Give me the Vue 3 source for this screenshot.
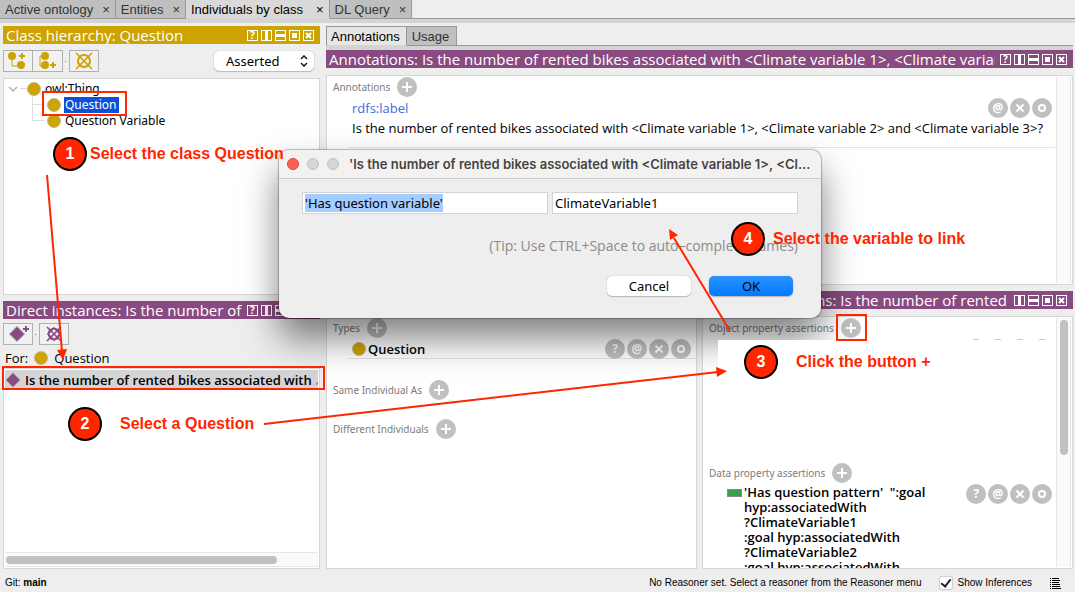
<script setup>
import { onMounted, ref } from 'vue'

const tabs = [
  { name: 'Active ontology', active: false },
  { name: 'Entities', active: false },
  { name: 'Individuals by class', active: true },
  { name: 'DL Query', active: false },
]
const controlPaths = {
  help: '',
  split: 'M4 1h3v9h-3z',
  stack: 'M1 4h9v3h-9z',
  full: 'M3 3h5v5h-5z',
  close: 'M3 3l5 5M8 3l-5 5',
}
const allControls = ['help', 'split', 'stack', 'full', 'close']
const fewControls = ['split', 'stack', 'full', 'close']
const pattern = [
  "'Has question pattern'  \":goal",
  'hyp:associatedWith',
  '?ClimateVariable1',
  ':goal hyp:associatedWith',
  '?ClimateVariable2',
  ':goal hyp:associatedWith',
]
const property = ref("'Has question variable'")
const target = ref('ClimateVariable1')
const propertyInput = ref(null)

onMounted(() => {
  propertyInput.value.focus()
  propertyInput.value.select()
})
</script>

<template>
  <div class="window">
    <nav class="tabs main-tabs">
      <button v-for="t in tabs" :key="t.name" class="tab" :class="{ active: t.active }">
        {{ t.name }}<span class="x">×</span>
      </button>
    </nav>

    <main class="workspace">
      <section class="left">
        <header class="bar gold">
          <h2>Class hierarchy: Question</h2>
          <span class="controls">
            <button v-for="c in allControls" :key="c" :aria-label="c">
              <svg width="11" height="11" viewBox="0 0 11 11" :class="c">
                <rect x=".5" y=".5" width="10" height="10" />
                <text v-if="c === 'help'" x="5.5" y="9">?</text>
                <path v-else :d="controlPaths[c]" />
              </svg>
            </button>
          </span>
        </header>
        <div class="toolbar">
          <button class="tool" aria-label="Add subclass">
            <svg width="22" height="20" viewBox="0 0 22 20">
              <path d="M5 6v9h7" fill="none" stroke="#cca300" />
              <circle cx="5" cy="5" r="4" fill="#cca300" /><circle cx="14" cy="14" r="4" fill="#cca300" />
              <path d="M15 2v6M12 5h6" stroke="#cca300" stroke-width="2" />
            </svg>
          </button>
          <button class="tool joined" aria-label="Add sibling class">
            <svg width="22" height="20" viewBox="0 0 22 20">
              <path d="M8 5h-5v10h6" fill="none" stroke="#cca300" />
              <circle cx="8" cy="5" r="4" fill="#cca300" /><circle cx="8" cy="14" r="4" fill="#cca300" />
              <path d="M16 11v6M13 14h6" stroke="#cca300" stroke-width="2" />
            </svg>
          </button>
          <i class="dot"></i>
          <button class="tool" aria-label="Delete class">
            <svg width="22" height="20" viewBox="0 0 22 20" fill="none" stroke="#cca300" stroke-width="2">
              <circle cx="11" cy="10" r="6" /><path d="M3 2l16 16M19 2l-16 16" stroke-width="1.6" />
            </svg>
          </button>
          <span class="picker">
            <select aria-label="Hierarchy"><option>Asserted</option></select>
            <svg width="8" height="12" viewBox="0 0 8 12"><path d="M1 4l3-3 3 3M1 8l3 3 3-3" fill="none" stroke="#222" stroke-width="1.6" /></svg>
          </span>
        </div>
        <div class="panel tree">
          <svg class="lines" width="46" height="44" viewBox="0 0 46 44" fill="none">
            <path d="M16 8.500h10M28.500 16v24.500h12M28.500 24.500h12" stroke="#ddd" />
            <path d="M5 7l4 4 4-4" stroke="#b4b4b4" stroke-width="1.5" />
          </svg>
          <ul>
            <li><i class="class-dot"></i><span>owl:Thing</span></li>
            <li class="child"><i class="class-dot"></i><span class="picked">Question</span></li>
            <li class="child"><i class="class-dot"></i><span>Question Variable</span></li>
          </ul>
        </div>

        <header class="bar plum">
          <h2>Direct instances: Is the number of rented bikes</h2>
          <span class="controls">
            <button v-for="c in allControls" :key="c" :aria-label="c">
              <svg width="11" height="11" viewBox="0 0 11 11" :class="c">
                <rect x=".5" y=".5" width="10" height="10" />
                <text v-if="c === 'help'" x="5.5" y="9">?</text>
                <path v-else :d="controlPaths[c]" />
              </svg>
            </button>
          </span>
        </header>
        <div class="toolbar low">
          <button class="tool" aria-label="Add individual">
            <svg width="22" height="20" viewBox="0 0 22 20">
              <path d="M10 2.500l7.500 7.500-7.500 7.500-7.500-7.500z" fill="#884a80" stroke="#a9a0a8" />
              <path d="M19 2v6M16 5h6" stroke="#884a80" stroke-width="1.800" />
            </svg>
          </button>
          <i class="dot"></i>
          <button class="tool" aria-label="Delete individual">
            <svg width="22" height="20" viewBox="0 0 22 20" fill="none" stroke="#884a80" stroke-width="1.600">
              <path d="M11 4l6 6-6 6-6-6z" /><circle cx="11" cy="10" r="5.500" /><path d="M4 3l14 14M18 3l-14 14" />
            </svg>
          </button>
        </div>
        <p class="for">For: <i class="class-dot"></i><span>Question</span></p>
        <div class="panel instances">
          <div class="instance">
            <svg width="16" height="16" viewBox="0 0 16 16"><path d="M8 .8l7.200 7.200-7.200 7.200-7.200-7.200z" fill="#884a80" stroke="#aaa" /></svg>
            <span>Is the number of rented bikes associated with</span><small>‚</small>
          </div>
          <div class="hscroll"><i></i></div>
        </div>
      </section>

      <section class="right">
        <nav class="tabs sub-tabs">
          <button class="tab active">Annotations</button>
          <button class="tab">Usage</button>
        </nav>
        <header class="bar plum">
          <h2>Annotations: Is the number of rented bikes associated with &lt;Climate variable 1&gt;, &lt;Climate variable 2&gt;</h2>
          <span class="controls">
            <button v-for="c in allControls" :key="c" :aria-label="c">
              <svg width="11" height="11" viewBox="0 0 11 11" :class="c">
                <rect x=".5" y=".5" width="10" height="10" />
                <text v-if="c === 'help'" x="5.5" y="9">?</text>
                <path v-else :d="controlPaths[c]" />
              </svg>
            </button>
          </span>
        </header>
        <div class="panel scrolling annotations">
          <div class="content">
            <h3>Annotations <button class="round plus" aria-label="Add annotation"></button></h3>
            <div class="entry">
              <div class="entry-text">
                <a href="#">rdfs:label</a>
                <p>Is the number of rented bikes associated with &lt;Climate variable 1&gt;, &lt;Climate variable 2&gt; and &lt;Climate variable 3&gt;?</p>
              </div>
              <span class="actions">
                <button class="round">@</button><button class="round cross" aria-label="Remove"></button><button class="round ring" aria-label="Edit"></button>
              </span>
            </div>
          </div>
          <div class="track"></div>
        </div>

        <div class="lower">
          <div class="half">
            <header class="bar plum">
              <h2>Description: Is the number of rented</h2>
            </header>
            <div class="panel">
              <div class="content">
                <h3>Types <button class="round plus" aria-label="Add type"></button></h3>
                <div class="entry type">
                  <i class="class-dot"></i><b>Question</b>
                  <span class="actions">
                    <button class="round">?</button><button class="round">@</button><button class="round cross" aria-label="Remove"></button><button class="round ring" aria-label="Edit"></button>
                  </span>
                </div>
                <h3 class="same">Same Individual As <button class="round plus" aria-label="Add same individual"></button></h3>
                <h3>Different Individuals <button class="round plus" aria-label="Add different individual"></button></h3>
              </div>
            </div>
          </div>
          <div class="half">
            <header class="bar plum">
              <h2 class="end">Property assertions: Is the number of rented</h2>
              <span class="controls">
                <button v-for="c in fewControls" :key="c" :aria-label="c">
                  <svg width="11" height="11" viewBox="0 0 11 11" :class="c">
                    <rect x=".5" y=".5" width="10" height="10" />
                    <path :d="controlPaths[c]" />
                  </svg>
                </button>
              </span>
            </header>
            <div class="panel scrolling">
              <div class="content">
                <h3>Object property assertions <button class="round plus" aria-label="Add object property assertion"></button></h3>
                <div class="blank">
                  <span class="actions">
                    <button v-for="n in 4" :key="n" class="round" aria-label="Action"></button>
                  </span>
                </div>
                <h3>Data property assertions <button class="round plus" aria-label="Add data property assertion"></button></h3>
                <div class="entry data">
                  <i class="green"></i>
                  <p><span v-for="(line, n) in pattern" :key="n">{{ line }}</span></p>
                  <span class="actions">
                    <button class="round">?</button><button class="round">@</button><button class="round cross" aria-label="Remove"></button><button class="round ring" aria-label="Edit"></button>
                  </span>
                </div>
              </div>
              <div class="track"><i></i></div>
            </div>
          </div>
        </div>
      </section>
    </main>

    <footer class="status">
      <span class="git">Git: <b>main</b></span>
      <span>No Reasoner set. Select a reasoner from the Reasoner menu</span>
      <label><input type="checkbox" checked />Show Inferences</label>
      <svg width="11" height="12" viewBox="0 0 11 12" stroke="#000"><path d="M0 1.500h1M2 1.500h7M0 3.500h1M2 3.500h8M0 5.500h1M2 5.500h7M0 7.500h1M2 7.500h8M0 9.500h1M2 9.500h8M0 11.500h1M2 11.500h9" /></svg>
    </footer>

    <div class="dialog" role="dialog" aria-labelledby="dialog-title">
      <header>
        <i class="light red"></i><i class="light"></i><i class="light"></i>
        <h1 id="dialog-title">'Is the number of rented bikes associated with &lt;Climate variable 1&gt;, &lt;Cl...</h1>
      </header>
      <form @submit.prevent>
        <div class="fields">
          <input ref="propertyInput" v-model="property" aria-label="Property" spellcheck="false" />
          <input v-model="target" aria-label="Individual" spellcheck="false" />
        </div>
        <p>(Tip: Use CTRL+Space to auto–complete names)</p>
        <div class="buttons">
          <button type="button">Cancel</button>
          <button type="submit" class="primary">OK</button>
        </div>
      </form>
    </div>

    <div class="overlay">
      <i class="cover"></i>
      <svg class="arrows" width="1075" height="592" viewBox="0 0 1075 592">
        <g stroke="#ff2600" stroke-width="2" fill="none">
          <path d="M47 175L62 351M264 424L718 372M730 331L674 238" />
          <rect x="43" y="92" width="83" height="23" />
          <rect x="3" y="367" width="321" height="22" />
          <rect x="837" y="315" width="29" height="25" />
        </g>
        <g fill="#ff2600">
          <path d="M63 360l-6-10 10-1zM727 371l-10 6-1-10zM669 229l9 6-8 5z" />
        </g>
      </svg>
      <div class="callout one"><b>1</b><span>Select the class Question</span></div>
      <div class="callout two"><b>2</b><span>Select a Question</span></div>
      <div class="callout three"><b>3</b><span>Click the button +</span></div>
      <div class="callout four"><b>4</b><span>Select the variable to link</span></div>
    </div>
  </div>
</template>

<style>
body {
  margin: 0;
}
</style>

<style scoped>
*, *::before {
  box-sizing: border-box;
}
h1, h2, h3, p, ul {
  margin: 0;
  padding: 0;
  font-weight: 400;
}
i {
  font-style: normal;
}
button {
  font: inherit;
  color: inherit;
  border: 0;
  padding: 0;
  background: none;
}
svg {
  display: block;
  flex: none;
}
.window {
  position: relative;
  display: flex;
  flex-direction: column;
  height: 100vh;
  overflow: hidden;
  background: #eee;
  color: #000;
  font: 13px/16px "Open Sans", "Noto Sans", sans-serif;
}
.tabs {
  display: flex;
  flex: none;
  font: 13px/17px "Liberation Sans", Arial, sans-serif;
  border-bottom: 4px solid #d4d4d4;
  box-shadow: inset 0 -1px #989898;
}
.tab {
  flex: none;
  color: #333;
  background: #bfbfbf;
  border: 1px solid #989898;
  border-width: 0 1px 1px 0;
  padding: 0 5px;
  white-space: nowrap;
}
.tab.active {
  color: #000;
  background: #d9d9d9;
  border-bottom-color: #d4d4d4;
}
.x {
  margin-left: 9px;
}
.active .x {
  margin-left: 13px;
}
.main-tabs {
  height: 23px;
}
.main-tabs .tab {
  height: 19px;
}
.sub-tabs {
  height: 24px;
  margin-top: 3px;
}
.sub-tabs .tab {
  height: 20px;
  border-top-width: 1px;
}
.sub-tabs .tab.active {
  border-left-width: 1px;
  background: #e6e6e6;
  padding: 0 6px 0 4px;
}
.sub-tabs .tab + .tab {
  padding: 0 7px 0 5px;
}
.workspace {
  flex: 1;
  min-height: 0;
  display: grid;
  grid-template-columns: minmax(0, 317fr) minmax(0, 747fr);
  column-gap: 6px;
  padding: 0 2px 0 3px;
}
.left, .right, .half {
  display: flex;
  flex-direction: column;
  min-width: 0;
  min-height: 0;
}
.left {
  padding-top: 3px;
}
.bar {
  flex: none;
  display: flex;
  align-items: center;
  height: 18px;
  padding: 0 6px 0 3px;
  color: #fff;
}
.gold {
  background: #cca300;
}
.plum {
  background: #884a80;
}
.bar h2 {
  flex: 1;
  min-width: 0;
  overflow: hidden;
  white-space: nowrap;
  font-size: 15px;
  line-height: 18px;
}
.bar h2.end {
  display: flex;
  justify-content: flex-end;
  padding-right: 2px;
}
.controls {
  flex: none;
  display: flex;
  gap: 3px;
  margin-left: 5px;
}
.controls rect {
  fill: none;
  stroke: #fff;
}
.controls path {
  fill: #fff;
}
.controls .close path {
  stroke: #fff;
  stroke-width: 2;
}
.controls text {
  fill: #fff;
  font: bold 10px "Noto Sans", sans-serif;
  text-anchor: middle;
}
.toolbar {
  flex: none;
  display: flex;
  align-items: center;
  height: 22px;
  margin: 6px 0;
}
.toolbar.low {
  margin: 4px 0;
}
.tool {
  width: 30px;
  height: 22px;
  border: 1px solid #b0b0b0;
  background: #f1f1f1;
  display: grid;
  place-items: center;
}
.tool.joined {
  border-left: 0;
}
.dot {
  width: 1px;
  height: 1px;
  margin: 0 3px 0 2px;
  background: #777;
}
.picker {
  position: relative;
  margin-left: auto;
  margin-right: 6px;
  width: 100px;
}
.picker select {
  appearance: none;
  display: block;
  width: 100%;
  height: 20px;
  padding: 0 8px 0 12px;
  border: 0;
  border-radius: 5px;
  background: #fff;
  box-shadow: 0 0 1px #999, 0 1px 1px #bbb;
  color: #000;
  font: 13px/20px "Noto Sans", sans-serif;
}
.picker svg {
  position: absolute;
  right: 6px;
  top: 4px;
}
.panel {
  flex: 1;
  min-height: 0;
  background: #fff;
  border: 1px solid #d6d6d6;
  overflow: hidden;
}
.tree {
  flex: 217;
  position: relative;
  padding-top: 2px;
  margin-bottom: 6px;
  font: 12px/16px "Noto Sans", sans-serif;
}
.tree .lines {
  position: absolute;
  left: 0;
  top: 1px;
}
.tree ul {
  position: relative;
  list-style: none;
  padding-left: 23px;
}
.tree li {
  display: flex;
  align-items: center;
  gap: 4px;
  height: 16px;
}
.tree li.child {
  padding-left: 20px;
}
.class-dot {
  flex: none;
  width: 14px;
  height: 14px;
  border-radius: 50%;
  background: #cca300;
  border: 1px solid #c5b98a;
}
.picked {
  color: #fff;
  background: #0a50d8;
  margin-left: -1px;
  padding: 0 3px 0 1px;
}
.for {
  flex: none;
  display: flex;
  align-items: center;
  height: 18px;
  margin-bottom: 1px;
  padding-left: 2px;
  gap: 6px;
}
.instances {
  flex: 202;
  display: flex;
  flex-direction: column;
  justify-content: space-between;
}
.instance {
  display: flex;
  align-items: center;
  gap: 4px;
  height: 19px;
  margin: 1px;
  background: #d4d4d4;
  font-weight: 600;
  white-space: nowrap;
  overflow: hidden;
}
.instance small {
  margin-left: auto;
  color: #777;
}
.hscroll {
  height: 15px;
  margin: 1px;
  padding: 3px 1px;
  border: 1px solid #e6e6e6;
  border-width: 1px 0;
  background: #fafafa;
}
.hscroll i {
  display: block;
  width: 87%;
  height: 8px;
  border-radius: 4px;
  background: #c1c1c1;
}
.right .panel {
  margin-top: 7px;
}
.annotations {
  flex: 210;
}
.scrolling {
  display: flex;
}
.content {
  flex: 1;
  min-width: 0;
  padding-left: 6px;
}
.track {
  flex: none;
  width: 15px;
  margin: 1px;
  padding: 2px 3px;
  border: 1px solid #e6e6e6;
  border-width: 0 1px;
  background: #fafafa;
}
.track i {
  display: block;
  width: 8px;
  height: 55%;
  border-radius: 4px;
  background: #c1c1c1;
}
.content h3 {
  display: flex;
  align-items: center;
  gap: 7px;
  height: 22px;
  font: 10px/16px "Noto Sans", sans-serif;
  color: #7c7c7c;
  white-space: nowrap;
}
.round {
  flex: none;
  display: grid;
  place-items: center;
  width: 20px;
  height: 20px;
  border-radius: 50%;
  background: #c0c0c0;
  color: #fff;
  font: bold 12px/20px "Noto Sans", sans-serif;
}
.plus::before {
  content: "";
  width: 10px;
  height: 10px;
  background: linear-gradient(#fff, #fff) center / 10px 2px no-repeat, linear-gradient(#fff, #fff) center / 2px 10px no-repeat;
}
.cross::before {
  content: "";
  width: 10px;
  height: 10px;
  transform: rotate(45deg);
  background: linear-gradient(#fff, #fff) center / 10px 2px no-repeat, linear-gradient(#fff, #fff) center / 2px 10px no-repeat;
}
.ring::before {
  content: "";
  width: 8px;
  height: 8px;
  border: 2px solid #fff;
  border-radius: 50%;
}
.actions {
  flex: none;
  display: flex;
  gap: 2px;
  margin-left: auto;
  padding-right: 3px;
}
.entry {
  display: flex;
  margin-left: 15px;
  border-bottom: 1px solid #e4e4e4;
}
.annotations .entry {
  position: relative;
  height: 50px;
  padding-left: 4px;
}
.annotations .actions {
  position: absolute;
  right: 0;
  top: 0;
}
.entry-text {
  white-space: nowrap;
  line-height: 20px;
}
a {
  color: #4169e1;
  text-decoration: none;
}
.lower {
  flex: 280;
  min-height: 0;
  display: grid;
  grid-template-columns: minmax(0, 1fr) minmax(0, 1fr);
  gap: 5px;
  padding-top: 6px;
}
.type {
  height: 20px;
  padding-left: 4px;
  align-items: center;
  gap: 2px;
}
.type b {
  font-weight: 600;
}
.type .actions {
  padding-right: 5px;
}
.content h3.same {
  margin: 20px 0 17px;
}
.blank {
  display: flex;
  height: 123px;
}
.data {
  padding-left: 3px;
}
.data .green {
  width: 15px;
  height: 8px;
  margin: 5px 2px 0 0;
  background: #3a9f4a;
  border: 1px solid #888;
}
.data p {
  padding-top: 1px;
}
.data p span {
  display: block;
  white-space: pre;
  font-weight: 600;
  line-height: 15px;
}
.status {
  flex: none;
  display: flex;
  align-items: center;
  height: 23px;
  padding: 4px 14px 0 5px;
  font: 10px/16px "Liberation Sans", Arial, sans-serif;
}
.git {
  margin-right: auto;
}
.status label {
  display: flex;
  align-items: center;
  gap: 6px;
  margin: 0 18px;
}
.status input {
  appearance: none;
  width: 12px;
  height: 12px;
  margin: 0;
  background: #fff;
  border-radius: 2px;
  box-shadow: 0 0 1px 1px #ccc;
}
.status input::before {
  content: "";
  display: block;
  width: 6px;
  height: 10px;
  margin: 0 0 0 3px;
  border: solid #222;
  border-width: 0 2px 2px 0;
  transform: rotate(38deg);
}
.dialog {
  position: absolute;
  left: 279px;
  top: 150px;
  width: 542px;
  background: #eee;
  border-radius: 10px;
  box-shadow: 0 0 1px 1px rgba(0, 0, 0, .25), 0 20px 36px rgba(0, 0, 0, .5);
}
.dialog header {
  display: flex;
  align-items: center;
  gap: 8px;
  height: 29px;
  padding-left: 8px;
  border-bottom: 1px solid #ccc;
  border-radius: 10px 10px 0 0;
  background: #f4f2f1;
}
.light {
  width: 12px;
  height: 12px;
  border-radius: 50%;
  background: #d8d6d5;
  border: 1px solid #c2c0bf;
}
.light.red {
  background: #ff5f57;
  border-color: #e0443e;
}
.dialog h1 {
  margin-left: 2px;
  font: 600 13px/16px Inter, sans-serif;
  color: #444;
  white-space: nowrap;
}
.dialog form {
  padding: 13px 23px 22px;
}
.fields {
  display: grid;
  grid-template-columns: 1fr 1fr;
  gap: 4px;
}
.fields input {
  min-width: 0;
  height: 22px;
  border: 1px solid #d4d4d4;
  padding: 0 2px;
  background: #fff;
  color: #000;
  font: 13px/16px "Noto Sans", sans-serif;
  outline: none;
}
.fields input::selection {
  color: #000;
  background: #a5cdff;
}
.dialog p {
  margin: 24px 0 22px;
  text-align: right;
  font-size: 14px;
  color: #8b8b8b;
}
.buttons {
  display: flex;
  justify-content: flex-end;
  gap: 18px;
  padding-right: 5px;
}
.buttons button {
  width: 84px;
  height: 20px;
  border-radius: 5px;
  background: #fff;
  box-shadow: 0 0 1px #999, 0 1px 1px #bbb;
  font: 13px/20px "Noto Sans", sans-serif;
}
.buttons .primary {
  background: linear-gradient(#2a92ff, #007aff);
}
.overlay {
  position: absolute;
  inset: 0;
  pointer-events: none;
}
.cover {
  position: absolute;
  left: 718px;
  top: 340px;
  width: 336px;
  height: 120px;
  background: #fff;
}
.arrows {
  position: absolute;
  left: 0;
  top: 0;
}
.callout {
  position: absolute;
  display: flex;
  align-items: center;
  color: #ff2600;
  font: bold 16px/20px "Liberation Sans", Arial, sans-serif;
  white-space: nowrap;
}
.callout b {
  display: grid;
  place-items: center;
  width: 34px;
  height: 34px;
  border: 2px solid #000;
  border-radius: 50%;
  background: #ff2600;
  color: #fff;
}
.one { left: 53px; top: 137px; gap: 3px; }
.two { left: 68px; top: 407px; gap: 18px; }
.three { left: 744px; top: 345px; gap: 18px; }
.four { left: 731px; top: 222px; gap: 8px; }
</style>
